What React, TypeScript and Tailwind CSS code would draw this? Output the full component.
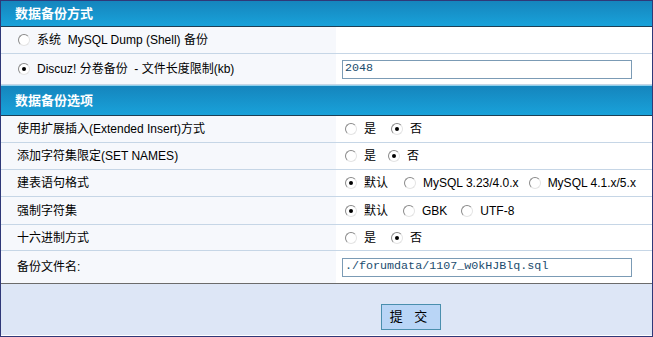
import React from 'react';

const font = { fontFamily: '"Liberation Sans", "Noto Sans CJK SC", sans-serif' };

const Radio: React.FC<{ checked?: boolean; label: string; gap?: string }> = ({ checked, label, gap = 'mr-4' }) => (
  <span className={`inline-flex shrink-0 items-center whitespace-pre ${gap}`}>
    <span className="relative mr-[7px] inline-block h-[12px] w-[12px] shrink-0 rounded-full border border-b-[#e4e4e4] border-l-[#8a8a8a] border-r-[#e4e4e4] border-t-[#8a8a8a] bg-white">
      {checked && <span className="absolute left-[3px] top-[3px] h-[4px] w-[4px] rounded-full bg-black" />}
    </span>
    {label}
  </span>
);

const Header: React.FC<{ title: string; tall?: boolean }> = ({ title, tall }) => (
  <div
    className={`flex items-center border-b border-[#1d3f55] bg-gradient-to-b from-[#1585bd] to-[#19a2da] pl-[14px] text-[13px] font-bold text-white ${
      tall ? 'h-[31px] border-t border-t-[#8fd0ec]' : 'h-[26px]'
    }`}
  >
    {title}
  </div>
);

const Row: React.FC<{ left: React.ReactNode; right?: React.ReactNode; h?: string; last?: boolean }> = ({
  left,
  right,
  h = 'h-[27px]',
  last,
}) => (
  <div className={`flex ${h} border-b ${last ? 'border-[#6b6b6b]' : 'border-[#c6d6e6]'}`}>
    <div className="flex w-[335px] shrink-0 items-center whitespace-nowrap bg-[#f6f8fc] pl-4">{left}</div>
    <div className="flex flex-1 items-center whitespace-nowrap bg-white pl-[6px]">{right}</div>
  </div>
);

const TextBox: React.FC<{ value: string }> = ({ value }) => (
  <div
    className="flex h-[19px] w-[290px] items-center border border-[#7b9bb5] bg-white pl-[2px] text-[11.7px] text-[#1b4c6e]"
    style={{ fontFamily: '"Liberation Mono", "DejaVu Sans Mono", monospace' }}
  >
    {value}
  </div>
);

export default function App() {
  return (
    <div className="h-[337px] w-[653px] border border-[#2f3878] bg-white text-[12px] text-black" style={font}>
      <Header title="数据备份方式" />
      <Row
        left={
          <span className="ml-[1px] flex items-center">
            <Radio label="系统  MySQL Dump (Shell) 备份" gap="" />
          </span>
        }
      />
      <Row
        h="h-[31px]"
        left={
          <span className="ml-[1px] flex items-center">
            <Radio checked label="Discuz! 分卷备份  - 文件长度限制(kb)" gap="" />
          </span>
        }
        right={<TextBox value="2048" />}
      />
      <Header title="数据备份选项" tall />
      <Row
        left="使用扩展插入(Extended Insert)方式"
        right={
          <span className="flex items-center pl-[3px]">
            <Radio label="是" gap="mr-[15px]" />
            <Radio checked label="否" />
          </span>
        }
      />
      <Row
        left="添加字符集限定(SET NAMES)"
        right={
          <span className="flex items-center pl-[3px]">
            <Radio label="是" gap="mr-[12px]" />
            <Radio checked label="否" />
          </span>
        }
      />
      <Row
        left="建表语句格式"
        right={
          <span className="flex items-center pl-[3px]">
            <Radio checked label="默认" gap="mr-[16px]" />
            <Radio label="MySQL 3.23/4.0.x" gap="mr-[10px]" />
            <Radio label="MySQL 4.1.x/5.x" />
          </span>
        }
      />
      <Row
        h="h-[28px]"
        left="强制字符集"
        right={
          <span className="flex items-center pl-[3px]">
            <Radio checked label="默认" gap="mr-[15px]" />
            <Radio label="GBK" gap="mr-[14px]" />
            <Radio label="UTF-8" />
          </span>
        }
      />
      <Row
        h="h-[26px]"
        left="十六进制方式"
        right={
          <span className="flex items-center pl-[3px]">
            <Radio label="是" gap="mr-[15px]" />
            <Radio checked label="否" />
          </span>
        }
      />
      <Row h="h-[33px]" last left="备份文件名:" right={<TextBox value="./forumdata/1107_w0kHJBlq.sql" />} />
      <div className="flex h-[51px] justify-center bg-[#dde6f6] pt-[20px]">
        <button className="ml-[168px] h-[26px] w-[60px] border border-[#4a8fae] bg-[#b9d5f6] text-[13px] tracking-[4px] text-black">
          提 交
        </button>
      </div>
    </div>
  );
}
